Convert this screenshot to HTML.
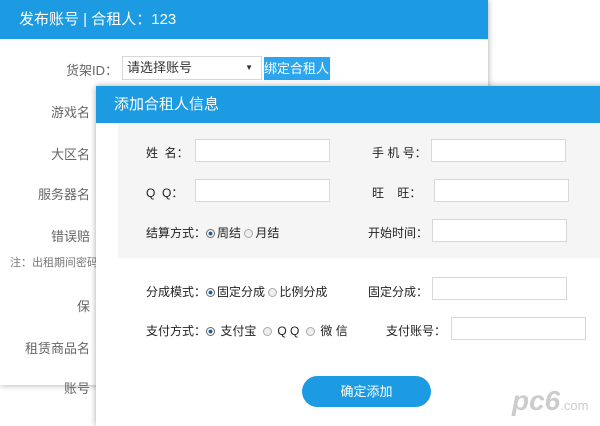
<!DOCTYPE html><html><head><meta charset="utf-8"><style>
body{margin:0;width:600px;height:423px;background:#fff;position:relative;overflow:hidden;font-family:"Liberation Sans","Noto Sans CJK SC",sans-serif;font-size:12px;color:#333}
.a{position:absolute}
.back{left:0;top:0;width:488px;height:385px;background:#fff;box-shadow:0 0 6px rgba(0,0,0,.35)}
.hd{background:#1c9be2;color:#fff;font-size:15px}
.lbl{color:#666;font-size:13px;text-align:right;width:100px}
.in{position:absolute;height:22px;border:1px solid #d8d8d8;background:#fff;box-sizing:border-box}
.t{position:absolute;font-size:12px;color:#222;white-space:pre}
.r{display:inline-block;width:9px;height:9px;border-radius:50%;border:1px solid #aaa;background:#eee;vertical-align:-1px;margin-right:2px;box-sizing:border-box}
.r.on{background:radial-gradient(#1a5e9a 35%,#fff 45%);border-color:#666}
</style></head><body>
<div class="a back">
<div class="a hd" style="left:0;top:0;width:488px;height:39px;line-height:39px;padding-left:19px;box-sizing:border-box">发布账号 | 合租人：123</div>
<div class="a lbl" style="left:18px;top:60px">货架ID：</div>
<div class="in" style="left:122px;top:56px;width:140px;height:24px;line-height:22px;padding-left:4px;font-size:13px">请选择账号<span style="position:absolute;right:8px;font-size:8px">▼</span></div>
<div class="a" style="left:264px;top:57px;width:66px;height:23px;line-height:23px;background:#2aa5ee;color:#fff;font-size:13px">绑定合租人</div>
<div class="a lbl" style="left:-10px;top:102px">游戏名</div>
<div class="a lbl" style="left:-10px;top:144px">大区名</div>
<div class="a lbl" style="left:-10px;top:184px">服务器名</div>
<div class="a lbl" style="left:-10px;top:226px">错误赔</div>
<div class="a" style="left:10px;top:254px;color:#777;font-size:11px">注：出租期间密码</div>
<div class="a lbl" style="left:-10px;top:296px">保</div>
<div class="a lbl" style="left:-10px;top:338px">租赁商品名</div>
<div class="a lbl" style="left:-10px;top:378px">账号</div>
</div>
<div class="a" style="left:96px;top:86px;width:510px;height:340px;background:#fff;box-shadow:0 0 6px rgba(0,0,0,.35)">
<div class="a hd" style="left:0;top:0;width:510px;height:37px;line-height:37px;padding-left:18px;box-sizing:border-box">添加合租人信息</div>
<div class="a" style="left:22px;top:37px;width:488px;height:135px;background:#f5f5f5"></div>
</div>
<div class="t" style="left:146px;top:144px">姓  名：</div><div class="in" style="left:195px;top:139px;width:135px;height:23px"></div>
<div class="t" style="left:372px;top:144px">手 机 号：</div><div class="in" style="left:431px;top:139px;width:135px;height:23px"></div>
<div class="t" style="left:146px;top:184px">Q  Q：</div><div class="in" style="left:195px;top:179px;width:135px;height:23px"></div>
<div class="t" style="left:372px;top:184px">旺    旺：</div><div class="in" style="left:434px;top:179px;width:135px;height:23px"></div>
<div class="t" style="left:146px;top:224px">结算方式：<span class="r on"></span>周结 <span class="r"></span>月结</div>
<div class="t" style="left:368px;top:224px">开始时间：</div><div class="in" style="left:432px;top:219px;width:135px;height:23px"></div>
<div class="t" style="left:146px;top:283px">分成模式：<span class="r on"></span>固定分成 <span class="r"></span>比例分成</div>
<div class="t" style="left:368px;top:283px">固定分成：</div><div class="in" style="left:432px;top:277px;width:135px;height:23px"></div>
<div class="t" style="left:146px;top:322px">支付方式：<span class="r on"></span> 支付宝  <span class="r"></span> Q Q  <span class="r"></span> 微 信</div>
<div class="t" style="left:386px;top:322px">支付账号：</div><div class="in" style="left:451px;top:317px;width:135px;height:23px"></div>
<div class="a" style="left:302px;top:376px;width:129px;height:31px;border-radius:16px;background:#1c9be2;color:#fff;text-align:center;line-height:31px;font-size:13px">确定添加</div>
<div class="a" style="left:512px;top:385px;color:#ccc;font-size:28px;font-weight:bold;font-style:italic">pc6<span style="font-size:13px;font-style:normal;font-weight:normal">.com</span></div>
</body></html>
